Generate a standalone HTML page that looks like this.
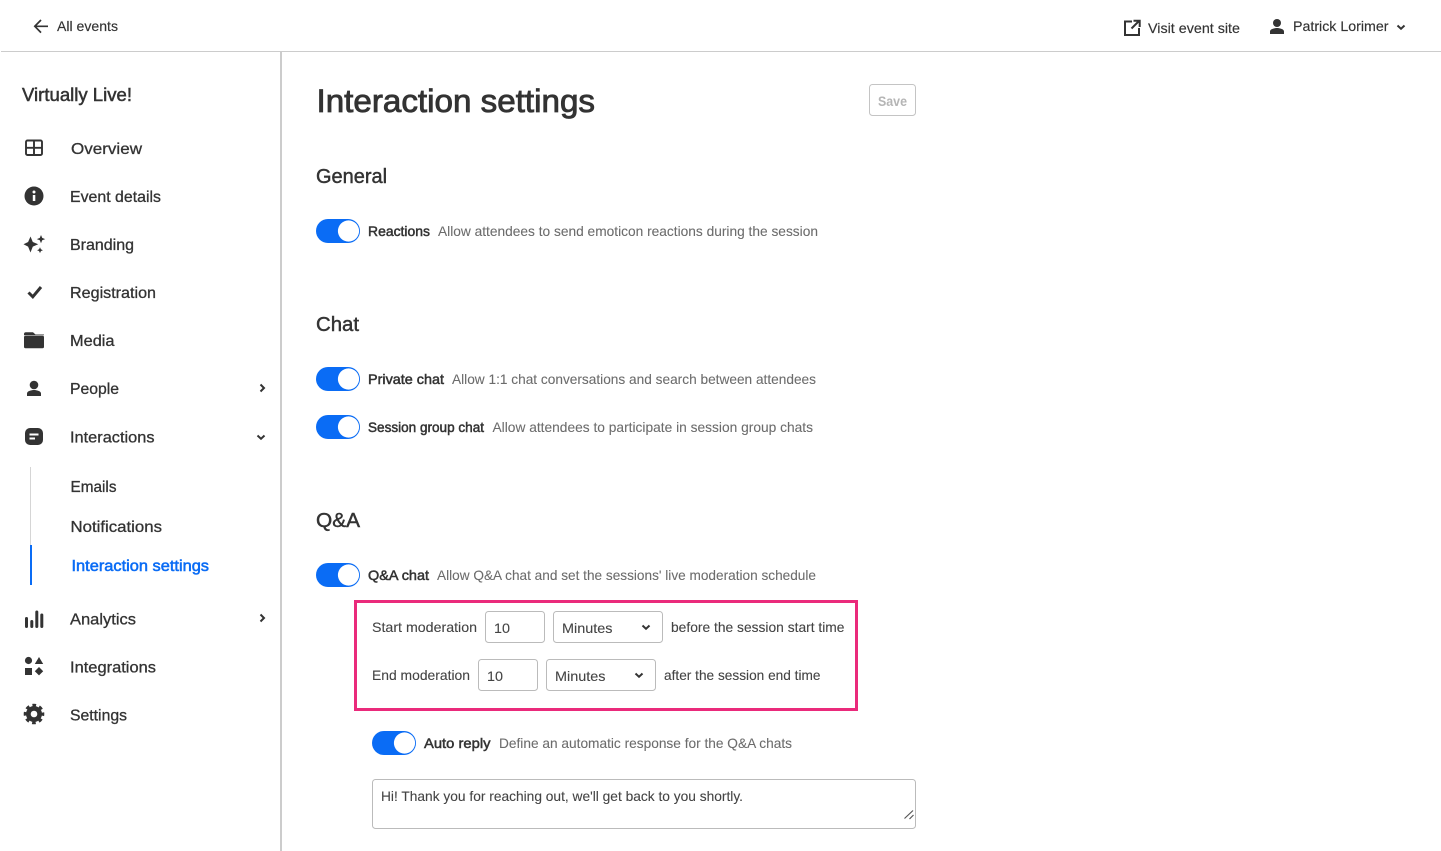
<!DOCTYPE html>
<html>
<head>
<meta charset="utf-8">
<style>
html,body{margin:0;padding:0;background:#fff;width:1441px;height:851px;overflow:hidden}
svg{display:block}
text{font-family:"Liberation Sans",sans-serif;fill:#333;}
.n{font-size:16px;stroke:#333;stroke-width:.3px}
.s{font-size:14px;stroke:#333;stroke-width:.15px}
.b{font-size:14px;stroke:#333;stroke-width:.5px}
.d{font-size:14px;fill:#6c6c6c;stroke:#6c6c6c;stroke-width:.08px}
.h{font-size:20px;stroke:#333;stroke-width:.45px}
.m{font-size:14px;fill:#444;stroke:#444;stroke-width:.1px}
</style>
</head>
<body>
<svg width="1441" height="851" viewBox="0 0 1441 851" xmlns="http://www.w3.org/2000/svg">
<defs>
<g id="tg"><rect x="0" y="0" width="44" height="24" rx="12" fill="#0a6cf5"/><circle cx="32.500" cy="12" r="10.600" fill="#fff"/></g>
</defs>
<!-- frame lines -->
<rect x="1" y="51" width="1440" height="1" fill="#ccc"/>
<rect x="280" y="52" width="2" height="799" fill="#ccc"/>

<!-- header -->
<path d="M48 26.300H35.500M41 20l-6.200 6.300 6.200 6.300" fill="none" stroke="#333" stroke-width="1.700"/>
<text class="s" x="57" y="31" textLength="61" lengthAdjust="spacingAndGlyphs">All events</text>
<path d="M1132 21.500h-7v13.500h14v-7M1131.500 28.500l7.500-7.500M1133.500 20.800h6.200v6.200" fill="none" stroke="#333" stroke-width="2"/>
<text class="s" x="1148" y="33" textLength="92" lengthAdjust="spacingAndGlyphs">Visit event site</text>
<circle cx="1277" cy="23" r="4" fill="#333"/>
<path d="M1270 34v-2.500c0-2.500 4.500-3.500 7-3.500s7 1 7 3.500V34z" fill="#333"/>
<text class="s" x="1293" y="31" textLength="95.500" lengthAdjust="spacingAndGlyphs">Patrick Lorimer</text>
<path d="M1397.500 25.500l3.500 3.300 3.500-3.300" fill="none" stroke="#333" stroke-width="2"/>

<!-- sidebar -->
<text x="22" y="101" font-size="18" stroke="#333" stroke-width=".5" textLength="110" lengthAdjust="spacingAndGlyphs">Virtually Live!</text>

<rect x="26" y="140.500" width="16" height="14.500" rx="1.500" fill="none" stroke="#333" stroke-width="1.900"/>
<path d="M34 140v15M26 147.800h16" stroke="#333" stroke-width="1.900"/>
<text class="n" x="71" y="154" textLength="71" lengthAdjust="spacingAndGlyphs">Overview</text>

<circle cx="34" cy="196" r="9.500" fill="#333"/>
<rect x="32.800" y="195" width="2.500" height="6" fill="#fff"/><circle cx="34" cy="192" r="1.500" fill="#fff"/>
<text class="n" x="70" y="202" textLength="91" lengthAdjust="spacingAndGlyphs">Event details</text>

<path d="M30.500 236.500l2.300 5.500 5.400 2.300-5.400 2.300-2.300 5.900-2.400-5.900-4.600-2.300 4.600-2.300z" fill="#333"/>
<path d="M41 235l1.200 2.900 3 1.200-3 1.200-1.200 2.900-1.200-2.900-3-1.200 3-1.200z" fill="#333"/>
<path d="M40 247.300l.9 2 2 .9-2 .9-.9 2-.9-2-2-.9 2-.9z" fill="#333"/>
<text class="n" x="70" y="250" textLength="64" lengthAdjust="spacingAndGlyphs">Branding</text>

<path d="M28.500 292.500l4.300 4.300 8.200-9.800" fill="none" stroke="#333" stroke-width="3"/>
<text class="n" x="70" y="298" textLength="86" lengthAdjust="spacingAndGlyphs">Registration</text>

<path d="M24 334c0-1 .6-1.800 1.800-1.800h7.200l2.500 2.300H44v.8H24z" fill="#333"/>
<rect x="24" y="335.800" width="20" height="12.400" rx="1.500" fill="#333"/>
<text class="n" x="70" y="346" textLength="44.500" lengthAdjust="spacingAndGlyphs">Media</text>

<circle cx="34" cy="385" r="4.300" fill="#333"/>
<path d="M27 396v-2.500c0-2.500 4.500-3.500 7-3.500s7 1 7 3.500V396z" fill="#333"/>
<text class="n" x="70" y="394" textLength="49" lengthAdjust="spacingAndGlyphs">People</text>
<path d="M260.500 384.500l3.500 3.500-3.500 3.500" fill="none" stroke="#333" stroke-width="2"/>

<rect x="25" y="428" width="18" height="17" rx="5" fill="#333"/>
<path d="M29.500 434.500h9M29.500 438.500h5.500" stroke="#fff" stroke-width="2"/>
<text class="n" x="70" y="442.500" textLength="84.500" lengthAdjust="spacingAndGlyphs">Interactions</text>
<path d="M257.500 435.500l3.500 3.300 3.500-3.300" fill="none" stroke="#333" stroke-width="2"/>

<rect x="30" y="467" width="1" height="78" fill="#d5d5d5"/>
<rect x="30" y="545" width="2" height="40" fill="#0a6cf5"/>
<text class="n" x="70.500" y="492" textLength="46" lengthAdjust="spacingAndGlyphs">Emails</text>
<text class="n" x="70.500" y="532" textLength="91.500" lengthAdjust="spacingAndGlyphs">Notifications</text>
<text x="71.500" y="571" font-size="16" style="fill:#0a6cf5;stroke:#0a6cf5;stroke-width:.55px" textLength="137.500" lengthAdjust="spacingAndGlyphs">Interaction settings</text>

<path d="M26.500 618.500v8M31.800 621.500v5M36.800 612v14.500M41.800 615v11.500" stroke="#333" stroke-width="3" stroke-linecap="round"/>
<text class="n" x="70" y="624.500" textLength="66" lengthAdjust="spacingAndGlyphs">Analytics</text>
<path d="M260.500 614.500l3.500 3.500-3.500 3.500" fill="none" stroke="#333" stroke-width="2"/>

<circle cx="28.500" cy="660.500" r="3.600" fill="#333"/>
<path d="M39 657l4.200 7h-8.400z" fill="#333"/>
<rect x="25" y="668" width="7" height="7" fill="#333"/>
<path d="M39 667l4.200 4.200-4.200 4.200-4.200-4.200z" fill="#333"/>
<text class="n" x="70" y="672.500" textLength="86" lengthAdjust="spacingAndGlyphs">Integrations</text>

<circle cx="34" cy="714" r="8" fill="#333"/>
<circle cx="34" cy="714" r="8.700" fill="none" stroke="#333" stroke-width="3.200" stroke-dasharray="3.600 3.230" stroke-dashoffset="1.800"/>
<circle cx="34" cy="714" r="3.300" fill="#fff"/>
<text class="n" x="70" y="720.500" textLength="57" lengthAdjust="spacingAndGlyphs">Settings</text>

<!-- main -->
<text x="316.500" y="112" font-size="32" stroke="#333" stroke-width=".85" textLength="278.500" lengthAdjust="spacingAndGlyphs">Interaction settings</text>
<rect x="869.500" y="84.500" width="46" height="31" rx="3" fill="#fff" stroke="#c4c4c4"/>
<text x="878" y="106" font-size="14" font-weight="bold" style="fill:#b5b5b5" textLength="29" lengthAdjust="spacingAndGlyphs">Save</text>

<text class="h" x="316" y="183" textLength="71" lengthAdjust="spacingAndGlyphs">General</text>
<use href="#tg" x="316" y="219"/>
<text class="b" x="368" y="236" textLength="62" lengthAdjust="spacingAndGlyphs">Reactions</text>
<text class="d" x="438" y="236" textLength="380" lengthAdjust="spacingAndGlyphs">Allow attendees to send emoticon reactions during the session</text>

<text class="h" x="316" y="331" textLength="43" lengthAdjust="spacingAndGlyphs">Chat</text>
<use href="#tg" x="316" y="367"/>
<text class="b" x="368" y="384" textLength="76" lengthAdjust="spacingAndGlyphs">Private chat</text>
<text class="d" x="452" y="384" textLength="364" lengthAdjust="spacingAndGlyphs">Allow 1:1 chat conversations and search between attendees</text>
<use href="#tg" x="316" y="415"/>
<text class="b" x="368" y="432" textLength="116" lengthAdjust="spacingAndGlyphs">Session group chat</text>
<text class="d" x="492.500" y="432" textLength="320.500" lengthAdjust="spacingAndGlyphs">Allow attendees to participate in session group chats</text>

<text class="h" x="316" y="527" textLength="44" lengthAdjust="spacingAndGlyphs">Q&amp;A</text>
<use href="#tg" x="316" y="563"/>
<text class="b" x="368" y="580" textLength="61" lengthAdjust="spacingAndGlyphs">Q&amp;A chat</text>
<text class="d" x="437" y="580" textLength="379" lengthAdjust="spacingAndGlyphs">Allow Q&amp;A chat and set the sessions' live moderation schedule</text>

<rect x="355.500" y="601.500" width="501" height="108" fill="none" stroke="#ea2a7b" stroke-width="3"/>

<text class="m" x="372" y="632" textLength="105" lengthAdjust="spacingAndGlyphs">Start moderation</text>
<rect x="485.500" y="611.500" width="59" height="31" rx="3" fill="#fff" stroke="#bbb"/>
<text class="m" x="494" y="633" textLength="16" lengthAdjust="spacingAndGlyphs">10</text>
<rect x="553.500" y="611.500" width="109" height="31" rx="3" fill="#fff" stroke="#bbb"/>
<text class="m" x="562" y="633" textLength="50.500" lengthAdjust="spacingAndGlyphs">Minutes</text>
<path d="M642.500 625.500l3.500 3.300 3.500-3.300" fill="none" stroke="#333" stroke-width="2"/>
<text class="m" x="671" y="632" textLength="173.500" lengthAdjust="spacingAndGlyphs">before the session start time</text>

<text class="m" x="372" y="680" textLength="98" lengthAdjust="spacingAndGlyphs">End moderation</text>
<rect x="478.500" y="659.500" width="59" height="31" rx="3" fill="#fff" stroke="#bbb"/>
<text class="m" x="487" y="681" textLength="16" lengthAdjust="spacingAndGlyphs">10</text>
<rect x="546.500" y="659.500" width="109" height="31" rx="3" fill="#fff" stroke="#bbb"/>
<text class="m" x="555" y="681" textLength="50.500" lengthAdjust="spacingAndGlyphs">Minutes</text>
<path d="M635.500 673.500l3.500 3.300 3.500-3.300" fill="none" stroke="#333" stroke-width="2"/>
<text class="m" x="664" y="680" textLength="156.500" lengthAdjust="spacingAndGlyphs">after the session end time</text>

<use href="#tg" x="372" y="731"/>
<text class="b" x="424" y="748" textLength="66.500" lengthAdjust="spacingAndGlyphs">Auto reply</text>
<text class="d" x="499" y="748" textLength="293" lengthAdjust="spacingAndGlyphs">Define an automatic response for the Q&amp;A chats</text>

<rect x="372.500" y="779.500" width="543" height="49" rx="3" fill="#fff" stroke="#bbb"/>
<text class="m" x="381" y="801" textLength="362" lengthAdjust="spacingAndGlyphs">Hi! Thank you for reaching out, we'll get back to you shortly.</text>
<path d="M904.500 818.500l8.500-8M909.500 819l4-4" stroke="#555" stroke-width="1.200"/>
</svg>
</body>
</html>
